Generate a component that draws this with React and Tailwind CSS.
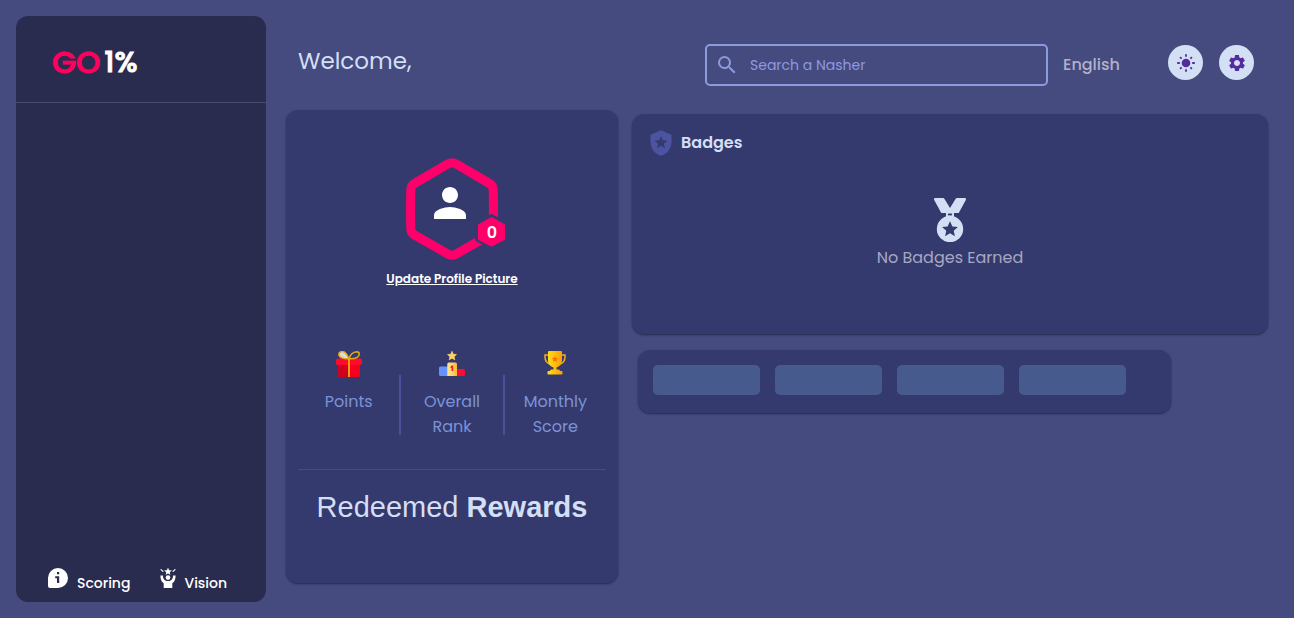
import React from "react";
import { MdPerson, MdSearch, MdSettings, MdLocalPolice } from "react-icons/md";

const STAR =
  "M0 -10 L2.9 -3.6 L9.5 -3.1 L4.5 1.5 L5.9 8.1 L0 4.6 L-5.9 8.1 L-4.5 1.5 L-9.5 -3.1 L-2.9 -3.6 Z";

function InfoIcon() {
  return (
    <svg viewBox="0 0 20 20" className="size-5" aria-hidden="true">
      <path d="M10 0a10 10 0 1 1 0 20H2a2 2 0 0 1-2-2v-8A10 10 0 0 1 10 0Z" fill="#fff" />
      <path d="M9 4h2.2v2.2H9ZM7.2 8.2h4V15H9v-4.8H7.2Z" fill="#2a2c4f" />
    </svg>
  );
}

function VisionIcon() {
  return (
    <svg viewBox="0 0 16 20" className="h-5 w-4" aria-hidden="true">
      <path d={STAR} transform="translate(8 3.6) scale(.4)" fill="#fff" />
      <path d="M1 1.6l2 1.8M15 1.6l-2 1.8" stroke="#fff" strokeWidth="1.2" strokeLinecap="round" />
      <circle cx="8" cy="9.6" r="2.3" fill="#fff" />
      <path
        d="M0.4 7.4h2.5c0 3 1.6 5.6 5.1 5.6s5.1-2.6 5.1-5.6h2.5c0 3.8-1 6.3-3.3 7.9V20H3.7v-4.7C1.4 13.7 .4 11.2 .4 7.4Z"
        fill="#fff"
      />
    </svg>
  );
}

function SunIcon() {
  return (
    <svg viewBox="0 0 18 18" className="size-[18px]" aria-hidden="true">
      <circle cx="9" cy="9" r="4.3" fill="currentColor" />
      <path
        d="M9 .2v2.6M9 15.2v2.6M.2 9h2.6M15.2 9h2.6M3.1 3.1l1.5 1.5M13.4 13.4l1.5 1.5M3.1 14.9l1.5-1.5M13.4 4.6l1.5-1.5"
        stroke="currentColor"
        strokeWidth="1.8"
      />
    </svg>
  );
}

function GiftIcon() {
  return (
    <svg viewBox="0 0 26 26" className="size-[26px]" aria-hidden="true">
      <path d="M2 13h22v11a2 2 0 0 1-2 2H4a2 2 0 0 1-2-2Z" fill="#f5001d" />
      <path d="M2 13h10v13H4a2 2 0 0 1-2-2Z" fill="#cf0020" />
      <rect x="0" y="7.5" width="26" height="6.5" rx="1.8" fill="#ff0a2b" />
      <rect x="12" y="7.5" width="2" height="18.5" fill="#f09a12" />
      <path d="M12.7 7.7C9.5 8.3 3 7 2.8 3.5 2.8 0 7.5-.2 9.5 2c1.7 1.7 2.7 4 3.2 5.7Z" fill="#d9dbe0" stroke="#e5ac12" strokeWidth="1.5" />
      <path d="M13.3 7.7c.2-3.5 3.5-6.8 7.5-6.9 3.3 0 3 3.8.4 5.5-2 1.3-5 1.5-7.9 1.4Z" fill="none" stroke="#e5ac12" strokeWidth="1.5" />
    </svg>
  );
}

function PodiumIcon() {
  return (
    <svg viewBox="0 0 26 26" className="size-[26px]" aria-hidden="true">
      <defs>
        <linearGradient id="podium" x1="0" x2="1">
          <stop offset="0" stopColor="#ffe48a" />
          <stop offset=".5" stopColor="#ffd56a" />
          <stop offset="1" stopColor="#f7b92e" />
        </linearGradient>
      </defs>
      <path d={STAR} transform="translate(13 5) scale(.47)" fill="#ffd166" stroke="#ffd166" strokeWidth="1.5" strokeLinejoin="round" />
      <path d="M0 17a1.5 1.5 0 0 1 1.5-1.5H9V25H1.5A1.5 1.5 0 0 1 0 23.5Z" fill="#6492ff" />
      <path d="M17 18h7.5a1.5 1.5 0 0 1 1.5 1.5v4a1.5 1.5 0 0 1-1.5 1.5H17Z" fill="#ff0a33" />
      <path d="M8.3 13a1.5 1.5 0 0 1 1.5-1.5h6.7A1.5 1.5 0 0 1 18 13v12H8.3Z" fill="url(#podium)" />
      <path d="M11.3 16.2l1.4-1.7h1.5V20h-1.7v-3.2h-1.2Z" fill="#ee1c2e" />
    </svg>
  );
}

function TrophyIcon() {
  return (
    <svg viewBox="0 0 22 24" className="h-6 w-[22px]" aria-hidden="true">
      <defs>
        <linearGradient id="trophy" x1="0" x2="1">
          <stop offset="0" stopColor="#ffdc1a" />
          <stop offset="1" stopColor="#f9a006" />
        </linearGradient>
      </defs>
      <path d="M4.5 4H1v2c0 4 2 6.5 6 7.2M17.5 4H21v2c0 4-2 6.5-6 7.2" fill="none" stroke="#f3ac25" strokeWidth="1.5" />
      <path d="M4 1.2C4 .5 4.5 0 5.2 0h11.6c.7 0 1.2.5 1.2 1.2V9c0 4-2.5 6.6-5.5 7.5v3h-3v-3C6.5 15.6 4 13 4 9Z" fill="url(#trophy)" />
      <path d="M6 20a1.5 1.5 0 0 1 1.5-1.5h7A1.5 1.5 0 0 1 16 20h1.500a1 1 0 0 1 1 1v1.500a1 1 0 0 1-1 1h-13a1 1 0 0 1-1-1V21a1 1 0 0 1 1-1Z" fill="url(#trophy)" />
      <path d={STAR} transform="translate(11 8.3) scale(.34)" fill="#ff6d00" />
    </svg>
  );
}

function MedalIcon() {
  return (
    <svg viewBox="0 0 32 44" className="h-11 w-8" aria-hidden="true">
      <path d="M1.3 0H9c.7 0 1.2.3 1.5.9L16 10 21.5.9c.3-.6.8-.9 1.5-.9h7.7c1 0 1.6 1 1.1 1.9L25 14.4c-.3.5-.7.7-1.3.7H8.3c-.6 0-1-.2-1.300-.7L.2 1.900C-.3 1 .3 0 1.300 0Z" fill="#d3dff5" />
      <path d="M12 14.5h8V20h-8Z" fill="#d3dff5" />
      <rect x="13.8" y="15.6" width="4.4" height="2" rx="1" fill="#353a6e" />
      <circle cx="16" cy="31" r="13.2" fill="#d3dff5" />
      <path d={STAR} transform="translate(16 31.500) scale(.83)" fill="#353a6e" />
    </svg>
  );
}

function Avatar() {
  return (
    <div className="relative grid size-[110px] place-items-center">
      <svg viewBox="0 0 110 110" className="col-start-1 row-start-1 size-full" aria-hidden="true">
        <path
          d="M50 10.5Q55 7 60 10.5L92.5 29.5Q96 31.5 96.2 36Q96.7 55 96.2 75Q96 79 92.5 81L60 99.5Q55 103 50 99.5L17.5 81Q14 79 13.8 75Q13.3 55 13.8 36Q14 31.5 17.5 29.5Z"
          fill="none"
          stroke="#ff006a"
          strokeWidth="9"
        />
        <path
          d="M94.5 63L108 70.5V85L94.5 92.5L81 85V70.5Z"
          fill="#353a6e"
          stroke="#353a6e"
          strokeWidth="6"
          strokeLinejoin="round"
        />
        <path
          d="M94.5 64L107 71V85L94.5 91.5L82 85V71Z"
          fill="#ff006a"
          stroke="#ff006a"
          strokeWidth="2"
          strokeLinejoin="round"
        />
      </svg>
      <MdPerson className="col-start-1 row-start-1 mr-1 mb-3 size-12 text-white" aria-hidden="true" />
      <span className="absolute right-0 bottom-5 w-[30px] text-center text-base leading-[22px] font-semibold text-white">0</span>
    </div>
  );
}

function Stat({ icon, label }) {
  return (
    <div className="flex flex-1 flex-col items-center gap-3">
      <div className="flex h-[26px] items-start">{icon}</div>
      <p className="max-w-18 text-center text-base leading-[25px] text-[#7b93d6]">{label}</p>
    </div>
  );
}

function Divider() {
  return <div className="mt-6 h-[60px] w-0.5 bg-[#4a5099]" />;
}

export default function App() {
  return (
    <div className="flex min-h-screen gap-5 bg-[#454a7f] py-4 pr-[26px] pl-4 font-['Poppins','Inter',sans-serif]">
      <aside className="flex w-[250px] shrink-0 flex-col justify-between rounded-xl bg-[#2a2c4f]">
        <div className="border-b border-[#4a4c70] px-9 pt-6 pb-[17px]">
          <a href="#home" className="flex items-center gap-1 leading-[45px]">
            <span className="text-[31px] font-medium text-[#ff005e] [-webkit-text-stroke:1px_#ff005e]">GO</span>
            <span className="text-[29px] font-medium text-white [-webkit-text-stroke:1px_white]">1%</span>
          </a>
        </div>
        <nav className="flex gap-[30px] px-8 pb-2 text-sm font-medium text-white">
          <a href="#scoring" className="flex items-start gap-[9px]">
            <InfoIcon />
            <span className="pt-1 leading-[22px]">Scoring</span>
          </a>
          <a href="#vision" className="flex items-start gap-2">
            <VisionIcon />
            <span className="pt-1 leading-[22px]">Vision</span>
          </a>
        </nav>
      </aside>

      <div className="flex min-w-0 flex-1 flex-col">
        <header className="flex h-[94px] items-center justify-between pl-3">
          <h1 className="pb-1 text-[23px] leading-9 text-[#d3dff5]">Welcome,</h1>
          <div className="flex items-center pt-1 pr-[14px]">
            <label className="flex h-[42px] w-[343px] items-center gap-[11px] rounded-[5px] border-2 border-[#8e9ae0] px-2">
              <MdSearch className="size-6 shrink-0 text-[#8e9ae0]" aria-hidden="true" />
              <input
                type="search"
                aria-label="Search a Nasher"
                placeholder="Search a Nasher"
                className="min-w-0 flex-1 bg-transparent text-sm text-[#8e9ae0] outline-none placeholder:text-[#8e9ae0]"
              />
            </label>
            <select
              aria-label="Language"
              className="ml-[15px] w-[105px] appearance-none bg-transparent text-base font-medium text-[#b0b2ca]"
            >
              <option>English</option>
            </select>
            <div className="flex gap-4 pb-[5px]">
              <button type="button" aria-label="Light mode" className="grid size-[35px] place-items-center rounded-full bg-[#d3dff5] text-[#542c9c]">
                <SunIcon />
              </button>
              <button type="button" aria-label="Settings" className="grid size-[35px] place-items-center rounded-full bg-[#d3dff5] text-[#542c9c]">
                <MdSettings className="size-5" />
              </button>
            </div>
          </div>
        </header>

        <main className="flex items-start gap-[14px]">
          <section className="flex w-[332px] shrink-0 flex-col rounded-xl bg-[#353a6e] px-3 pt-11 pb-14 shadow-[0_1px_2px_#272a4d]">
            <div className="flex flex-col items-center">
              <Avatar />
              <button type="button" className="mt-1 text-xs leading-[22px] font-semibold text-white underline">
                Update Profile Picture
              </button>
            </div>
            <div className="mt-[61px] flex">
              <Stat icon={<GiftIcon />} label="Points" />
              <Divider />
              <Stat icon={<PodiumIcon />} label="Overall Rank" />
              <Divider />
              <Stat icon={<TrophyIcon />} label="Monthly Score" />
            </div>
            <hr className="mt-[30px] border-[#464b7a]" />
            <h2 className="mt-[17px] text-center font-['Liberation_Sans',Arial,sans-serif] text-[29px] leading-10 text-[#d3dff5]">
              Redeemed <strong className="font-bold">Rewards</strong>
            </h2>
          </section>

          <div className="flex min-w-0 flex-1 flex-col gap-4 pt-1">
            <section className="h-[220px] rounded-xl bg-[#353a6e] px-[15px] py-[15px] shadow-[0_1px_2px_#272a4d]">
              <div className="flex items-center gap-[6px]">
                <MdLocalPolice className="size-7 text-[#4c53a0]" aria-hidden="true" />
                <h2 className="text-base leading-6 font-semibold text-[#d3dff5]">Badges</h2>
              </div>
              <div className="flex flex-col items-center gap-1 pt-[41px]">
                <MedalIcon />
                <p className="text-base leading-6 text-[#a5a8c4]">No Badges Earned</p>
              </div>
            </section>
            <section className="ml-[6px] flex h-[63px] w-[533px] max-w-full gap-[15px] rounded-xl bg-[#353a6e] p-[15px] shadow-[0_1px_2px_#272a4d]">
              <div className="h-[30px] w-[107px] rounded-[5px] bg-[#475a8d]" />
              <div className="h-[30px] w-[107px] rounded-[5px] bg-[#475a8d]" />
              <div className="h-[30px] w-[107px] rounded-[5px] bg-[#475a8d]" />
              <div className="h-[30px] w-[107px] rounded-[5px] bg-[#475a8d]" />
            </section>
          </div>
        </main>
      </div>
    </div>
  );
}
